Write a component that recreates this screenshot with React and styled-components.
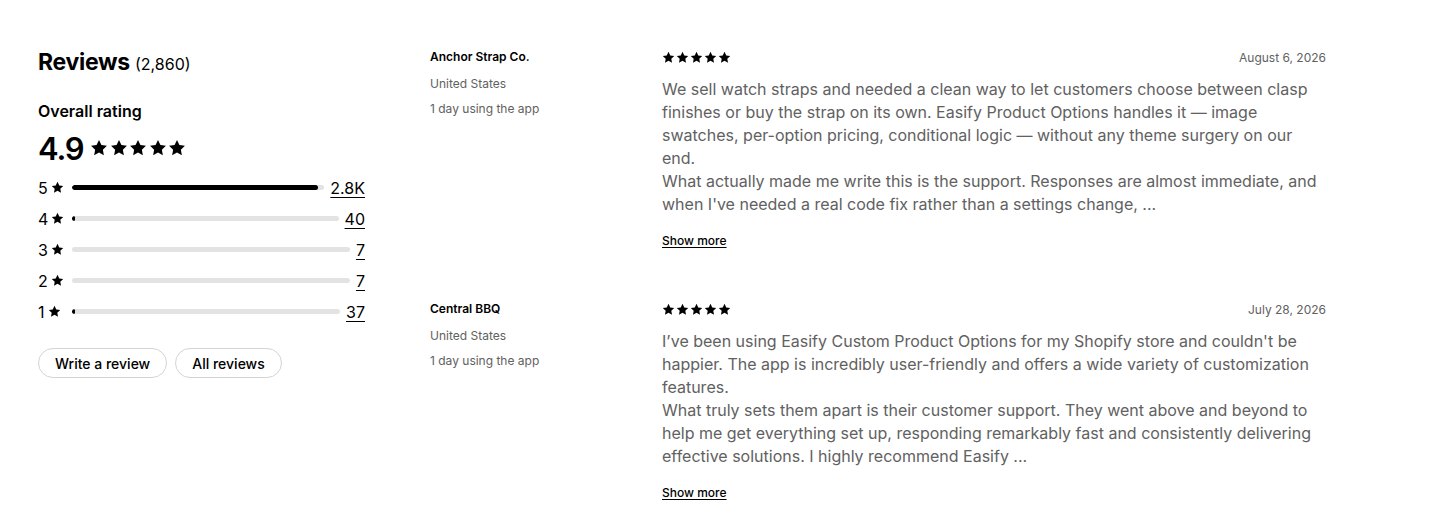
import React from "react";
import styled, { createGlobalStyle } from "styled-components";

const GlobalStyle = createGlobalStyle`
  body {
    margin: 0;
    background: #fff;
    font-family: Inter, "Noto Sans", sans-serif;
    color: #303030;
  }
`;

const Page = styled.div`
  display: flex;
  flex-direction: row;
  align-items: flex-start;
  padding: 46px 38px 0 38px;
`;

const Summary = styled.div`
  display: flex;
  flex-direction: column;
  width: 327px;
  margin-right: 65px;
  flex-shrink: 0;
`;

const Title = styled.h2`
  margin: 0;
  font-size: 23px;
  line-height: 32px;
  font-weight: 700;
  letter-spacing: -0.3px;
  color: #000;
`;

const TitleCount = styled.span`
  font-size: 16px;
  font-weight: 400;
  letter-spacing: 0;
`;

const Subtitle = styled.h3`
  margin: 19px 0 0 0;
  font-size: 16px;
  line-height: 24px;
  font-weight: 600;
  color: #000;
`;

const Score = styled.div`
  display: flex;
  align-items: center;
  gap: 7px;
  margin-top: 5px;
  height: 40px;
  font-size: 31px;
  font-weight: 600;
  color: #000;
  letter-spacing: -1.2px;
`;

const Bars = styled.div`
  display: flex;
  flex-direction: column;
  margin-top: 4px;
`;

const BarRow = styled.div`
  display: flex;
  align-items: center;
  height: 31px;
`;

const BarLabel = styled.span`
  display: flex;
  align-items: center;
  gap: 3px;
  width: 34px;
  font-size: 16px;
  color: #000;
`;

const Track = styled.div`
  flex: 1;
  height: 5px;
  border-radius: 3px;
  background: #e3e3e3;
  margin-right: 6px;
  overflow: hidden;
`;

const Fill = styled.div`
  height: 100%;
  min-width: 3px;
  border-radius: 3px;
  background: #000;
`;

const Count = styled.a`
  font-size: 16px;
  color: #000;
  text-decoration: underline;
  text-underline-offset: 3px;
  text-decoration-thickness: 1px;
`;

const Actions = styled.div`
  display: flex;
  gap: 8px;
  margin-top: 21px;
`;

const Pill = styled.button`
  height: 30px;
  padding: 0 16px;
  border: 1px solid #d4d4d4;
  border-radius: 15px;
  background: #fff;
  font-family: inherit;
  font-size: 14px;
  font-weight: 450;
  color: #000;
`;

const ReviewList = styled.div`
  display: flex;
  flex-direction: column;
  gap: 52px;
  padding-top: 3px;
`;

const Review = styled.div`
  display: grid;
  grid-template-columns: 232px 664px;
`;

const Author = styled.div`
  display: flex;
  flex-direction: column;
  gap: 9px;
`;

const AuthorName = styled.div`
  font-size: 12px;
  line-height: 16px;
  font-weight: 600;
  color: #000;
  margin-bottom: 2px;
`;

const Meta = styled.div`
  font-size: 12px;
  line-height: 16px;
  color: #616161;
`;

const Body = styled.div`
  display: flex;
  flex-direction: column;
`;

const BodyHeader = styled.div`
  display: flex;
  justify-content: space-between;
  align-items: center;
  height: 16px;
`;

const DateText = styled.span`
  font-size: 12px;
  color: #616161;
`;

const Text = styled.p`
  margin: 12.5px 0 0 0;
  font-size: 16px;
  line-height: 23px;
  color: #616161;
  white-space: pre-line;
`;

const ShowMore = styled.a`
  margin-top: 17.5px;
  font-size: 12px;
  line-height: 16px;
  font-weight: 500;
  color: #000;
  text-decoration: underline;
  text-underline-offset: 2px;
  align-self: flex-start;
`;

const StarGroup = styled.span`
  display: inline-flex;
  gap: ${p => p.$gap}px;
`;

const Star = ({ size }) => (
  <svg width={size} height={size} viewBox="0 0 20 20" fill="#000">
    <path d="M10 1.2l2.7 5.6 6.1.8-4.5 4.3 1.1 6.1L10 15.1 4.6 18l1.1-6.1L1.2 7.6l6.1-.8z" />
  </svg>
);

const Stars = ({ size, gap }) => (
  <StarGroup $gap={gap}>
    {[0, 1, 2, 3, 4].map(i => (
      <Star key={i} size={size} />
    ))}
  </StarGroup>
);

const distribution = [
  { stars: 5, count: "2.8K", pct: 97.5 },
  { stars: 4, count: "40", pct: 1 },
  { stars: 3, count: "7", pct: 0 },
  { stars: 2, count: "7", pct: 0 },
  { stars: 1, count: "37", pct: 1 },
];

const reviews = [
  {
    name: "Anchor Strap Co.",
    country: "United States",
    usage: "1 day using the app",
    date: "August 6, 2026",
    text:
      "We sell watch straps and needed a clean way to let customers choose between clasp finishes or buy the strap on its own. Easify Product Options handles it \u2014 image swatches, per-option pricing, conditional logic \u2014 without any theme surgery on our end.\nWhat actually made me write this is the support. Responses are almost immediate, and when I've needed a real code fix rather than a settings change, ...",
  },
  {
    name: "Central BBQ",
    country: "United States",
    usage: "1 day using the app",
    date: "July 28, 2026",
    text:
      "I\u2019ve been using Easify Custom Product Options for my Shopify store and couldn't be happier. The app is incredibly user-friendly and offers a wide variety of customization features.\nWhat truly sets them apart is their customer support. They went above and beyond to help me get everything set up, responding remarkably fast and consistently delivering effective solutions. I highly recommend Easify ...",
  },
];

export default function App() {
  return (
    <>
      <GlobalStyle />
      <Page>
        <Summary>
          <Title>
            Reviews <TitleCount>(2,860)</TitleCount>
          </Title>
          <Subtitle>Overall rating</Subtitle>
          <Score>
            4.9
            <Stars size={18} gap={1.5} />
          </Score>
          <Bars>
            {distribution.map(d => (
              <BarRow key={d.stars}>
                <BarLabel>
                  {d.stars}
                  <Star size={13} />
                </BarLabel>
                <Track>
                  {d.pct > 0 && <Fill style={{ width: `${d.pct}%` }} />}
                </Track>
                <Count href="#">{d.count}</Count>
              </BarRow>
            ))}
          </Bars>
          <Actions>
            <Pill>Write a review</Pill>
            <Pill>All reviews</Pill>
          </Actions>
        </Summary>
        <ReviewList>
          {reviews.map(r => (
            <Review key={r.name}>
              <Author>
                <AuthorName>{r.name}</AuthorName>
                <Meta>{r.country}</Meta>
                <Meta>{r.usage}</Meta>
              </Author>
              <Body>
                <BodyHeader>
                  <Stars size={13} gap={1} />
                  <DateText>{r.date}</DateText>
                </BodyHeader>
                <Text>{r.text}</Text>
                <ShowMore href="#">Show more</ShowMore>
              </Body>
            </Review>
          ))}
        </ReviewList>
      </Page>
    </>
  );
}
